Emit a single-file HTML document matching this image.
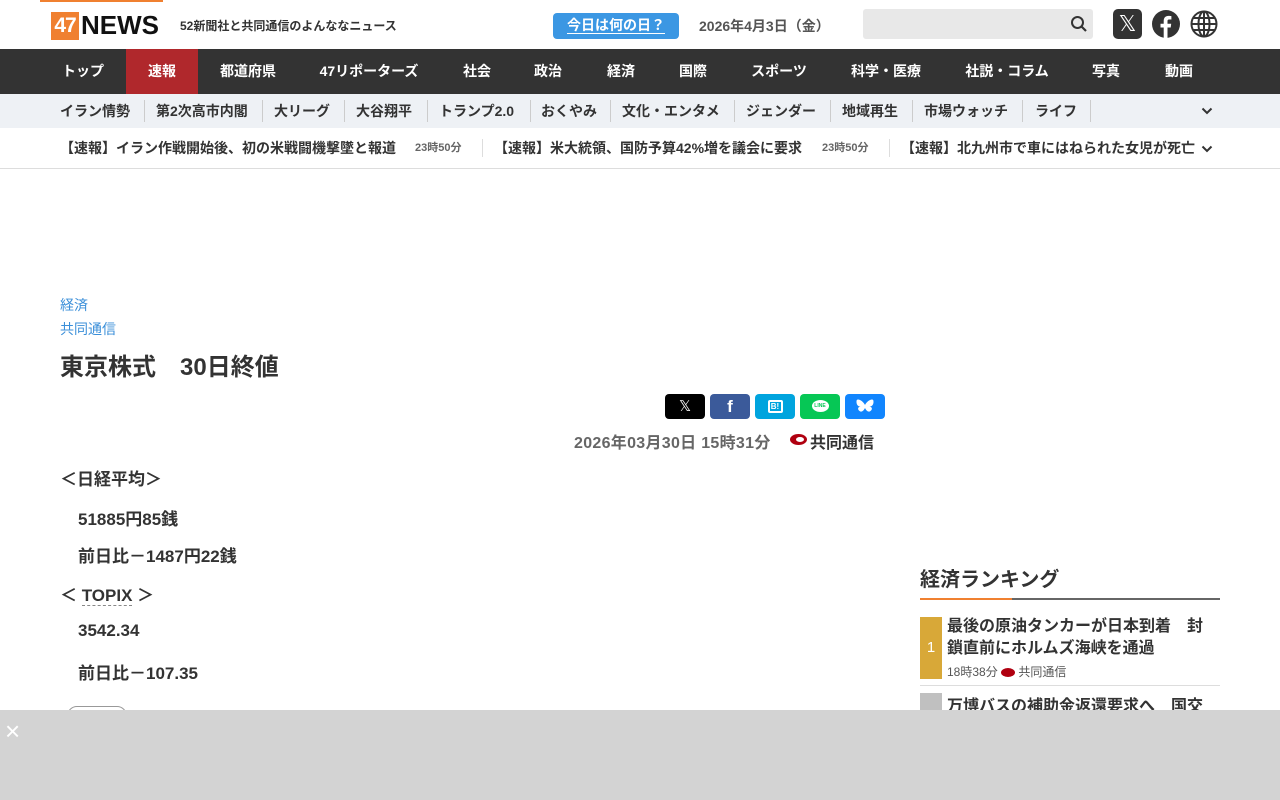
<!DOCTYPE html>
<html><head><meta charset="utf-8"><style>
*{margin:0;padding:0;box-sizing:border-box}
body{width:1280px;height:800px;overflow:hidden;background:#fff;font-family:"Liberation Sans","Noto Sans CJK JP",sans-serif;color:#333;position:relative}
.a{position:absolute;white-space:nowrap}
.nav{position:absolute;top:49px;left:0;width:1280px;height:45px;background:#333}
.nav span{position:absolute;top:0;line-height:45px;color:#fff;font-size:14px;font-weight:bold;transform:translateX(-50%)}
.sub{position:absolute;top:94px;left:0;width:1280px;height:34px;background:#eef1f5}
.sub span{position:absolute;top:0;line-height:34px;font-size:14px;font-weight:bold;color:#333}
.sep{position:absolute;width:1px;background:#ccc}
.tick{position:absolute;top:128px;left:0;width:1280px;height:41px;border-bottom:1px solid #ddd}
.tick span{position:absolute;line-height:41px;font-size:14px;font-weight:bold;color:#333}
.tick small{position:absolute;line-height:41px;font-size:11px;color:#666;font-weight:bold}
.sh{position:absolute;top:394px;width:40px;height:25px;border-radius:4px}
.body{font-size:17px;font-weight:bold;color:#333}
</style></head><body>
<div class="a" style="left:40px;top:0;width:123px;height:2px;background:#f08030"></div>
<div class="a" style="left:51px;top:12px;width:28px;height:28px;background:#f08030;color:#fff;font-weight:bold;font-size:21px;line-height:28px;text-align:center;letter-spacing:-1px">47</div>
<div class="a" style="left:81px;top:9px;font-weight:900;font-size:26px;line-height:32px;color:#111;letter-spacing:0px">NEWS</div>
<div class="a" style="left:180px;top:17px;font-size:12px;font-weight:bold;color:#333">52新聞社と共同通信のよんななニュース</div>
<div class="a" style="left:553px;top:13px;width:126px;height:26px;background:#3b97e3;border-radius:4px;color:#fff;font-size:14px;font-weight:bold;text-align:center;line-height:25px"><span style="border-bottom:1px solid #fff">今日は何の日？</span></div>
<div class="a" style="left:699px;top:16px;font-size:14px;font-weight:bold;color:#555">2026年4月3日（金）</div>
<div class="a" style="left:863px;top:9px;width:230px;height:30px;background:#e8e8e8;border-radius:3px"></div>
<svg class="a" style="left:1070px;top:15px" width="18" height="18" viewBox="0 0 18 18"><circle cx="7.5" cy="7.5" r="5.5" fill="none" stroke="#333" stroke-width="2"/><path d="M11.5 11.5L16 16" stroke="#333" stroke-width="2.2"/></svg>
<div class="a" style="left:1113px;top:9px;width:29px;height:30px;background:#333;border-radius:5px;color:#fff;font-size:22px;text-align:center;line-height:30px">𝕏</div>
<svg class="a" style="left:1152px;top:10px" width="28" height="28" viewBox="0 0 28 28"><circle cx="14" cy="14" r="14" fill="#333"/><path d="M15.5 28V17.5h3.2l.5-3.8h-3.7v-2.4c0-1.1.3-1.8 1.9-1.8h2v-3.4c-.4 0-1.5-.2-2.9-.2-2.9 0-4.8 1.7-4.8 5v2.8H8.5v3.8h3.2V28z" fill="#fff"/></svg>
<svg class="a" style="left:1190px;top:10px" width="28" height="28" viewBox="0 0 28 28" fill="none" stroke="#333" stroke-width="2"><circle cx="14" cy="14" r="12.5"/><ellipse cx="14" cy="14" rx="5.5" ry="12.5"/><path d="M14 1.5v25M1.5 14h25M3.5 8h21M3.5 20h21"/></svg>
<div class="nav">
<div class="a" style="left:126px;top:0;width:72px;height:45px;background:#b0282c"></div>
<span style="left:83px">トップ</span><span style="left:162px">速報</span><span style="left:248px">都道府県</span><span style="left:369px">47リポーターズ</span><span style="left:477px">社会</span><span style="left:548px">政治</span><span style="left:621px">経済</span><span style="left:693px">国際</span><span style="left:779px">スポーツ</span><span style="left:886px">科学・医療</span><span style="left:1007px">社説・コラム</span><span style="left:1106px">写真</span><span style="left:1179px">動画</span>
</div>
<div class="sub">
<span style="left:60px">イラン情勢</span><span style="left:156px">第2次高市内閣</span><span style="left:274px">大リーグ</span><span style="left:356px">大谷翔平</span><span style="left:439px">トランプ2.0</span><span style="left:541px">おくやみ</span><span style="left:622px">文化・エンタメ</span><span style="left:746px">ジェンダー</span><span style="left:842px">地域再生</span><span style="left:924px">市場ウォッチ</span><span style="left:1035px">ライフ</span>
<div class="sep" style="left:144px;top:6px;height:22px"></div><div class="sep" style="left:262px;top:6px;height:22px"></div><div class="sep" style="left:344px;top:6px;height:22px"></div><div class="sep" style="left:427px;top:6px;height:22px"></div><div class="sep" style="left:530px;top:6px;height:22px"></div><div class="sep" style="left:610px;top:6px;height:22px"></div><div class="sep" style="left:734px;top:6px;height:22px"></div><div class="sep" style="left:830px;top:6px;height:22px"></div><div class="sep" style="left:912px;top:6px;height:22px"></div><div class="sep" style="left:1022px;top:6px;height:22px"></div><div class="sep" style="left:1090px;top:6px;height:22px"></div>
<svg class="a" style="left:1201px;top:12px" width="12" height="10"><path d="M1.5 2.5L6 7l4.5-4.5" fill="none" stroke="#333" stroke-width="2"/></svg>
</div>
<div class="tick">
<span style="left:60px">【速報】イラン作戦開始後、初の米戦闘機撃墜と報道</span><small style="left:415px">23時50分</small>
<div class="sep" style="left:482px;top:11px;height:18px;background:#ddd"></div>
<span style="left:494px">【速報】米大統領、国防予算42%増を議会に要求</span><small style="left:822px">23時50分</small>
<div class="sep" style="left:889px;top:11px;height:18px;background:#ddd"></div>
<span style="left:901px">【速報】北九州市で車にはねられた女児が死亡</span>
<svg class="a" style="left:1201px;top:16px" width="12" height="10"><path d="M1.5 2.5L6 7l4.5-4.5" fill="none" stroke="#333" stroke-width="2"/></svg>
</div>
<div class="a" style="left:60px;top:295px;font-size:14px;color:#3b8fd9">経済</div>
<div class="a" style="left:60px;top:319px;font-size:14px;color:#3b8fd9">共同通信</div>
<div class="a" style="left:60px;top:347px;font-size:24px;font-weight:bold;color:#333">東京株式　30日終値</div>
<div class="sh" style="left:665px;background:#000;color:#fff;text-align:center;line-height:25px;font-size:15px">𝕏</div>
<div class="sh" style="left:710px;background:#3b5a9a;color:#fff;text-align:center;line-height:26px;font-size:17px;font-weight:bold">f</div>
<div class="sh" style="left:755px;background:#00a4de"><div style="margin:6px auto;width:15px;height:13px;border:2px solid #fff;border-radius:2px;color:#fff;font-size:8px;font-weight:bold;line-height:9px;text-align:center">B!</div></div>
<div class="sh" style="left:800px;background:#06c755"><div style="margin:6px auto;width:17px;height:12px;background:#fff;border-radius:50%;color:#06c755;font-size:5px;font-weight:bold;line-height:12px;text-align:center">LINE</div></div>
<div class="sh" style="left:845px;background:#1185fe"><svg style="margin:5px 11px" width="18" height="15" viewBox="0 0 18 15"><path d="M9 6C7.5 3 4.5 0.5 2 0.5 0.5 0.5 0.5 2 0.5 3c0 2 1 4.5 4 4.5-3 .5-3 3 -1 4.5 2 1.5 4 0 5.5-3 1.5 3 3.5 4.5 5.5 3 2-1.5 2-4 -1-4.5 3 0 4-2.5 4-4.5 0-1 0-2.5-1.5-2.5C13.5.5 10.5 3 9 6z" fill="#fff"/></svg></div>
<div class="a" style="left:574px;top:429px;font-size:16px;font-weight:bold;color:#666;letter-spacing:0.3px">2026年03月30日 15時31分</div>
<div class="a" style="left:790px;top:434px;width:17px;height:11px;border-radius:50%;background:#b00010"><div style="margin:3px 0 0 6px;width:8px;height:5px;border-radius:50%;background:#fff"></div></div>
<div class="a" style="left:810px;top:429px;font-size:16px;font-weight:bold;color:#333">共同通信</div>
<div class="a body" style="left:60px;top:465px">＜日経平均＞</div>
<div class="a body" style="left:78px;top:505px">51885円85銭</div>
<div class="a body" style="left:78px;top:542px">前日比－1487円22銭</div>
<div class="a body" style="left:60px;top:581px">＜ <span style="border-bottom:1px dashed #888">TOPIX</span> ＞</div>
<div class="a body" style="left:78px;top:621px">3542.34</div>
<div class="a body" style="left:78px;top:659px">前日比－107.35</div>
<div class="a" style="left:67px;top:706px;width:60px;height:20px;border:1px solid #999;border-radius:10px"></div>
<div class="a" style="left:920px;top:563px;font-size:20px;font-weight:bold;color:#333">経済ランキング</div>
<div class="a" style="left:920px;top:598px;width:300px;height:2px;background:#666"></div>
<div class="a" style="left:920px;top:598px;width:92px;height:2px;background:#f08030"></div>
<div class="a" style="left:920px;top:617px;width:22px;height:62px;background:#d8a838;color:#fff;text-align:center;line-height:62px;font-size:15px">1</div>
<div class="a" style="left:947px;top:616px;font-size:16px;font-weight:bold;color:#333;line-height:22px;white-space:normal;width:265px">最後の原油タンカーが日本到着　封鎖直前にホルムズ海峡を通過</div>
<div class="a" style="left:947px;top:663px;font-size:12px;color:#555">18時38分 <span style="display:inline-block;width:14px;height:9px;border-radius:50%;background:#b00010;vertical-align:-1px"></span> 共同通信</div>
<div class="a" style="left:920px;top:685px;width:300px;height:1px;background:#ddd"></div>
<div class="a" style="left:920px;top:693px;width:22px;height:20px;background:#c0c0c0"></div>
<div class="a" style="left:947px;top:692px;font-size:16px;font-weight:bold;color:#333">万博バスの補助金返還要求へ　国交</div>
<div class="a" style="left:0;top:710px;width:1280px;height:90px;background:#d3d3d3"></div>
<div class="a" style="left:5px;top:716px;font-size:26px;color:#fff;line-height:30px">×</div>
</body></html>
